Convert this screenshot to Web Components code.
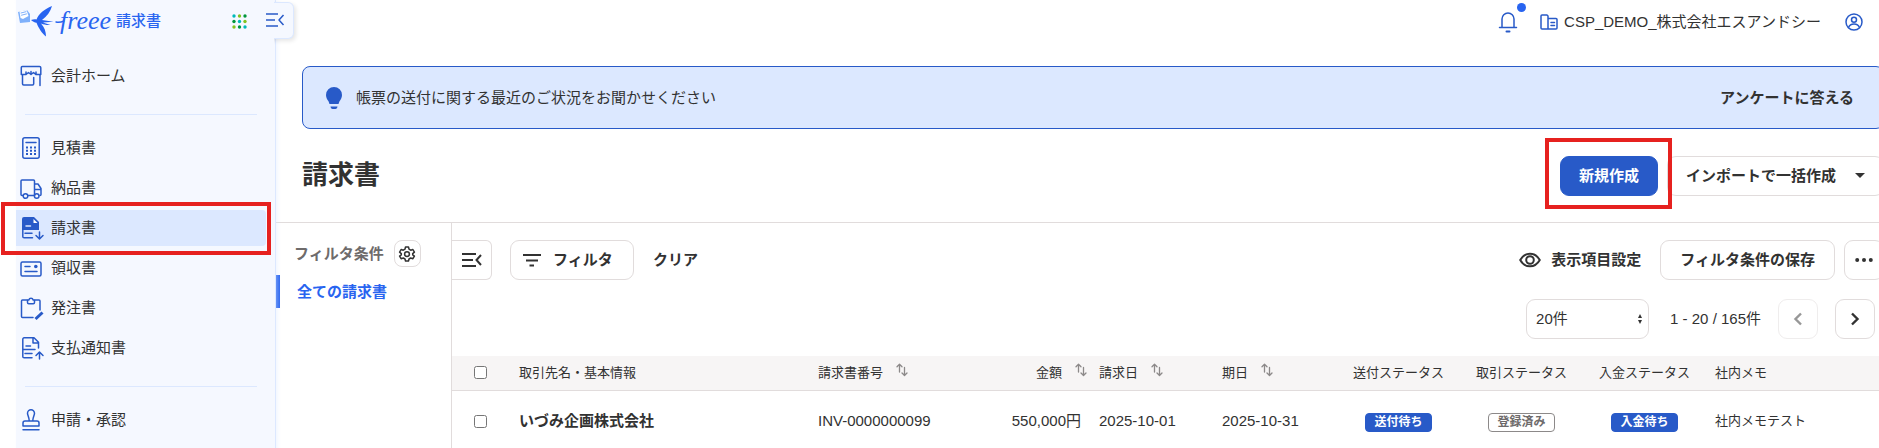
<!DOCTYPE html>
<html lang="ja">
<head>
<meta charset="utf-8">
<title>freee 請求書</title>
<style>
    :root {
        --primary: #285ac8;
        --link: #2864f0;
        --text: #323232;
        --muted: #6e6b6b;
        --line: #e1dcdc;
        --side-bg: #f5f8ff;
        --pale: #dce8ff;
        --mark: #e6211f;
    }

    body {
        margin: 0;
        background: #fff;
        color: var(--text);
        font: 15px/20px "Liberation Sans", "Noto Sans CJK JP", sans-serif;
        overflow: hidden;
    }
</style>
</head>
<body>
<invoice-app></invoice-app>

<script>
const base = `
    * { box-sizing: border-box; }
    button, select, input { font: inherit; color: inherit; margin: 0; }
    button { cursor: pointer; }
    a { color: inherit; text-decoration: none; }
`

function define(name, css, html) {
	const template = document.createElement('template')
	template.innerHTML = `<style>${base}${css}</style>${html}`

	customElements.define(name, class extends HTMLElement {
		constructor() {
			super()
			this.attachShadow({ mode: 'open' }).appendChild(template.content.cloneNode(true))
		}
	})
}

// icons: [viewBox, markup], stroked with the current colour
const icons = {
	shop: ['0 0 22 22', '<path d="M3 1.500h16.500a1.300 1.300 0 0 1 1.300 1.300V9.500H15.800L13.500 7.500 11 9.500 8.500 7.500 6 9.500H1.300V2.800A1.300 1.300 0 0 1 3 1.500zM6 9V7M11 9V6.500M16 9V7M2.500 9.500V18.800a1.200 1.200 0 0 0 1.200 1.200H12.500a1.200 1.200 0 0 0 1.200-1.200V12.500M20 9.500V20.500"/>'],
	calc: ['0 0 22 22', '<rect x="2.800" y=".8" width="16.400" height="20.400" rx="2"/><path d="M6 5.500h10"/><g fill="currentColor" stroke="none"><path d="M6 9.500h2v2H6zM10 9.500h2v2h-2zM14 9.500h2v2h-2zM6 12.800h2v2H6zM10 12.800h2v2h-2zM14 12.800h2v2h-2zM6 16.100h2v2H6zM10 16.100h2v2h-2zM14 16.100h2v2h-2z"/></g>'],
	truck: ['0 0 22 22', '<path d="M3 18.500H2a1 1 0 0 1-1-1V4a1 1 0 0 1 1-1h11.500a1 1 0 0 1 1 1v14.500H8M14.500 7H18l3 4.500v6a1 1 0 0 1-1 1M14.500 12.500H21"/><circle cx="5.500" cy="19" r="2.300"/><circle cx="16.700" cy="19" r="2.300"/>'],
	invoice: ['0 0 22 22', '<path fill="currentColor" stroke="none" d="M4 0h10l5 5v8H2V2a2 2 0 0 1 2-2z"/><path fill="#fff" stroke="none" d="M13.500 2v4h4z"/><path stroke="#dce8ff" d="M6 9h4.500"/><path d="M2.800 12v7.500a1.300 1.300 0 0 0 1.300 1.300H12.500M5 16.300h7M19.500 15v6.500M16 18.500l3.500 3.500 3.500-3.500"/>'],
	receipt: ['0 0 22 22', '<rect x="1" y="5" width="20" height="14" rx="1.500"/><path d="M5 9.500h5M5 14.500h12"/><circle cx="15.800" cy="9.500" r="1.800" fill="currentColor" stroke="none"/>'],
	order: ['0 0 22 22', '<path d="M7 3H2.500a1 1 0 0 0-1 1v15.500a1 1 0 0 0 1 1H13M15 3h4a1 1 0 0 1 1 1v9"/><path d="M7.500 3h1.300a2.300 2.300 0 0 1 4.400 0H14.500v2.500a1.200 1.200 0 0 1-1.200 1.200H8.700a1.200 1.200 0 0 1-1.200-1.200z"/><path stroke-width="3" stroke-linecap="butt" d="M15.500 22l7-6.500"/>'],
	notice: ['0 0 22 22', '<path d="M14 .8H4.100A1.300 1.300 0 0 0 2.800 2.100V19.500a1.300 1.300 0 0 0 1.300 1.300H12M14 .8l4.500 4.500V11M13 1.500v4.500h5M6 9h4.500M3 12.500h12M5 16.500h7M19.500 22v-6.500M16 18.500l3.500-3.500 3.500 3.500"/>'],
	stamp: ['0 0 22 22', '<path d="M9.200 11.500C9.200 8.500 7.500 6 7.500 4.200a3.500 3.500 0 0 1 7 0C14.500 6 12.800 8.500 12.800 11.500M3 17v-3a2 2 0 0 1 2-2h12a2 2 0 0 1 2 2v3zM3 20.800h16"/>'],
	collapse: ['0 0 20 16', '<path stroke-linecap="butt" d="M1 2h12M1 8h9M1 14h12M18.500 3l-4.500 5 4.500 5"/>'],
	fold: ['0 0 20 16', '<path stroke-width="2" stroke-linecap="butt" stroke-linejoin="miter" d="M0 2h14M0 8h11M0 14h14M19 3l-4.500 5 4.500 5"/>'],
	bell: ['0 0 20 22', '<path d="M1.500 16.500h17M4 16.500V8a6 6 0 0 1 12 0v8.500"/><path stroke-width="2" d="M8.500 20.500h3"/>'],
	building: ['0 0 18 16', '<path d="M8 15H2a1 1 0 0 1-1-1V2a1 1 0 0 1 1-1h5l1 1zM8 4.500h8a1 1 0 0 1 1 1V14a1 1 0 0 1-1 1H8zM11 8.500h3.500M11 11.500h3.500"/>'],
	user: ['0 0 18 18', '<circle cx="9" cy="9" r="8"/><circle cx="9" cy="6.800" r="2.500"/><path d="M3.500 14.500c1-2.500 3-3.500 5.500-3.500s4.500 1 5.500 3.500"/>'],
	bulb: ['0 0 16 22', '<path fill="currentColor" stroke="none" d="M8 0a8 8 0 0 1 8 8c0 2.700-1.200 4.500-2.500 6.200L12.500 17h-9l-1-2.800C1.200 12.500 0 10.700 0 8a8 8 0 0 1 8-8zM4.500 19.500h7a2.500 2.500 0 0 1-2 2.500h-3a2.500 2.500 0 0 1-2-2.500z"/>'],
	gear: ['0 0 16 16', '<path d="M6.500 1h3l.5 2.200 1.700 1 2.200-.7 1.500 2.600L13.700 7.600v1.200l1.700 1.300-1.500 2.600-2.200-.7-1.700 1L9.500 15h-3L6 13l-1.700-1-2.200.7L.6 10.100l1.700-1.300V7.600L.6 6.100l1.500-2.600 2.200.7L6 3.200z"/><circle cx="8" cy="8.100" r="2.400"/>'],
	filter: ['0 0 18 14', '<path stroke-width="2" stroke-linecap="butt" d="M0 2h18M3 7.500h12M6.500 12.500h4.500"/>'],
	eye: ['0 0 22 16', '<path stroke-width="2" d="M1.200 8C3.500 4 7 1.700 11 1.700S18.500 4 20.800 8C18.500 12 15 14.300 11 14.300S3.500 12 1.200 8z"/><circle stroke-width="2" cx="11" cy="8" r="3.800"/>'],
	dots: ['0 0 18 4', '<g fill="currentColor" stroke="none"><circle cx="2.200" cy="2" r="2"/><circle cx="9" cy="2" r="2"/><circle cx="15.800" cy="2" r="2"/></g>'],
	prev: ['0 0 10 14', '<path stroke-width="2.400" stroke-linecap="butt" stroke-linejoin="miter" d="M8 1.500L2.500 7 8 12.500"/>'],
	next: ['0 0 10 14', '<path stroke-width="2.400" stroke-linecap="butt" stroke-linejoin="miter" d="M2 1.500L7.500 7 2 12.500"/>'],
	caret: ['0 0 10 5', '<path fill="currentColor" stroke="none" d="M0 0h10L5 5z"/>'],
	updown: ['0 0 6 10', '<path fill="currentColor" stroke="none" d="M1 4l2-4 2 4zM1 6l2 4 2-4z"/>'],
	sort: ['0 0 12 14', '<path stroke-width="1.300" d="M3.500 9V1.500M1 3.800l2.500-2.500L6 3.800M8.500 4.500V12M6 10l2.500 2.500L11 10"/>'],
	apps: ['0 0 15 15', '<g stroke="none"><g fill="#00b9b9"><circle cx="2" cy="2" r="1.700"/><circle cx="7.500" cy="7.500" r="1.700"/><circle cx="13" cy="13" r="1.700"/></g><g fill="#82c31e"><circle cx="7.500" cy="2" r="1.700"/><circle cx="13" cy="7.500" r="1.700"/><circle cx="2" cy="13" r="1.700"/></g><g fill="#00963c"><circle cx="13" cy="2" r="1.700"/><circle cx="2" cy="7.500" r="1.700"/><circle cx="7.500" cy="13" r="1.700"/></g></g>'],
	// swallow carrying a letter
	swallow: ['0 0 42 32', '<g stroke="none"><path fill="#7eb0fb" d="M0 7l9-2 3 4v8L2 18z"/><path fill="#fff" d="M1.500 6.500l7-1.500 2 6-5.500 3-2.500-1z"/><path stroke="#7eb0fb" stroke-width="1" d="M3 8l5-1.300M3.500 10.200l5-1.300"/><path fill="currentColor" d="M13 15c2-.8 4-.9 5.500-.6C21 8.500 26 4.500 34 1c-1.500 5.500-5 10.500-10 14l11.500 1.800-10.500.8 7.500 2.300c-3.500.3-6.500-.2-9.500-1.400 3.500 3.800 5 8 5 13C24 28.500 20.500 23 18.500 17.800c-2-.3-4-1.300-5.500-2.800z"/></g><path stroke-width="1.400" d="M38 17c2 .5 5 .3 8-1"/>'],
}

customElements.define('app-icon', class extends HTMLElement {
	constructor() {
		super()
		this.attachShadow({ mode: 'open' })
	}

	connectedCallback() {
		const [box, body] = icons[this.getAttribute('name')]
		const [, , w, h] = box.split(' ')
		this.shadowRoot.innerHTML = `
            <style>
                :host { display: inline-flex; flex: none; }
                svg { display: block; overflow: visible; }
            </style>
            <svg width="${w}" height="${h}" viewBox="${box}" fill="none" stroke="currentColor"
                stroke-width="1.5" stroke-linecap="round" stroke-linejoin="round" aria-hidden="true">${body}</svg>
        `
	}
})

// red frame drawn over whatever it wraps
define('mark-frame', `
    :host { display: block; position: relative; }
    i {
        position: absolute;
        inset: var(--frame-inset, 0);
        z-index: 3;
        border: 4px solid var(--mark);
        pointer-events: none;
    }
`, `<slot></slot><i></i>`)

define('nav-item', `
    :host { display: block; }
    a {
        display: flex;
        align-items: center;
        gap: 9px;
        height: 36px;
        margin-right: 9px;
        padding-left: 4px;
        border-radius: 0 4px 4px 0;
    }
    :host([current]) a { background: var(--pale); }
    ::slotted(app-icon) { color: var(--primary); }
`, `<a href="#"><slot name="icon"></slot><slot></slot></a>`)

define('side-bar', `
    :host {
        display: block;
        position: relative;
        background: var(--side-bg);
        border-right: 1px solid var(--pale);
        box-shadow: 2px 0 4px #dce8ff66;
    }
    .brand {
        display: flex;
        align-items: center;
        height: 42px;
        margin-bottom: 16px;
        padding: 0 28px 0 2px;
        color: var(--link);
    }
    .logo { display: flex; align-items: center; flex: 1; }
    .word {
        font: italic 26px/30px "Liberation Serif", serif;
        margin-right: 5px;
    }
    .product { font-weight: 500; }
    .apps { border: 0; padding: 0; background: none; display: flex; }
    .toggle {
        position: absolute;
        top: 2px;
        right: -19px;
        z-index: 2;
        display: flex;
        align-items: center;
        height: 37px;
        width: 34px;
        border: 1px solid var(--pale);
        border-left: 0;
        border-radius: 0 6px 6px 0;
        background: var(--side-bg);
        color: var(--primary);
        box-shadow: 2px 2px 4px #0000001a;
        clip-path: inset(-6px -8px -8px 14px);
    }
    .toggle-icon {
        position: absolute;
        top: 12px;
        right: -10px;
        z-index: 2;
        color: var(--primary);
        pointer-events: none;
    }
    nav { display: grid; gap: 4px; }
    hr {
        width: 232px;
        height: 1px;
        margin: 16px 0 11px 9px;
        border: 0;
        background: var(--pale);
    }
    mark-frame { --frame-inset: -8px 4px -9px -15px; }
`, `
    <div class="brand">
        <a class="logo" href="#"><app-icon name="swallow"></app-icon><span class="word">freee</span><span class="product">請求書</span></a>
        <button class="apps" aria-label="アプリ一覧"><app-icon name="apps"></app-icon></button>
    </div>
    <button class="toggle" aria-label="メニューを閉じる"></button>
    <app-icon class="toggle-icon" name="collapse"></app-icon>
    <nav>
        <nav-item><app-icon slot="icon" name="shop"></app-icon>会計ホーム</nav-item>
        <hr>
        <nav-item><app-icon slot="icon" name="calc"></app-icon>見積書</nav-item>
        <nav-item><app-icon slot="icon" name="truck"></app-icon>納品書</nav-item>
        <mark-frame><nav-item current><app-icon slot="icon" name="invoice"></app-icon>請求書</nav-item></mark-frame>
        <nav-item><app-icon slot="icon" name="receipt"></app-icon>領収書</nav-item>
        <nav-item><app-icon slot="icon" name="order"></app-icon>発注書</nav-item>
        <nav-item><app-icon slot="icon" name="notice"></app-icon>支払通知書</nav-item>
        <hr>
        <nav-item><app-icon slot="icon" name="stamp"></app-icon>申請・承認</nav-item>
    </nav>
`)

define('top-bar', `
    :host {
        display: flex;
        align-items: center;
        justify-content: flex-end;
        height: 44px;
        padding-right: 16px;
    }
    app-icon { color: var(--primary); }
    button { position: relative; display: flex; border: 0; padding: 0; background: none; }
    .bell { margin-right: 22px; }
    .bell i {
        position: absolute;
        top: -8px;
        right: -8px;
        width: 9px;
        height: 9px;
        border-radius: 50%;
        background: var(--link);
    }
    .company { display: flex; align-items: center; gap: 6px; margin-right: 24px; }
`, `
    <button class="bell" aria-label="お知らせ"><app-icon name="bell"></app-icon><i></i></button>
    <a class="company" href="#"><app-icon name="building"></app-icon><slot></slot></a>
    <button aria-label="アカウント"><app-icon name="user"></app-icon></button>
`)

define('info-banner', `
    :host {
        display: flex;
        align-items: center;
        gap: 14px;
        height: 63px;
        margin: 22px 0 0 26px;
        padding: 0 29px 0 23px;
        border: 1px solid var(--primary);
        border-radius: 8px;
        background: var(--pale);
    }
    app-icon { color: var(--primary); }
    p { flex: 1; margin: 0; }
    ::slotted(a) { color: inherit; font-weight: bold; text-decoration: none; }
`, `<app-icon name="bulb"></app-icon><p><slot></slot></p><slot name="action"></slot>`)

define('ui-button', `
    :host { display: block; }
    button {
        display: flex;
        align-items: center;
        justify-content: center;
        gap: var(--gap, 12px);
        width: 100%;
        height: 40px;
        padding: 0 var(--pad, 18px);
        border: 1px solid var(--line);
        border-radius: 9px;
        background: #fff;
        font-weight: bold;
        white-space: nowrap;
    }
    :host([primary]) button {
        border-color: var(--primary);
        background: var(--primary);
        color: #fff;
    }
    :host([plain]) button { border-color: transparent; background: none; }
    :host([square]) { width: 40px; }
    :host([square]) button { padding: 0; }
    :host([dim]) { opacity: .5; }
    :host([tab]) button { border-left: 0; border-radius: 0 6px 6px 0; }
`, `<button><slot></slot></button>`)

define('page-head', `
    :host {
        display: flex;
        align-items: center;
        gap: 9px;
        height: 94px;
        padding-left: 26px;
        border-bottom: 1px solid var(--line);
    }
    h1 { flex: 1; margin: 0 0 2px; font-size: 26px; line-height: 40px; }
    .actions { display: flex; gap: 9px; }
    mark-frame { --frame-inset: -18px -14px -13px -15px; }
    .import { --gap: 19px; }
`, `
    <h1>請求書</h1>
    <div class="actions">
        <mark-frame><ui-button primary>新規作成</ui-button></mark-frame>
        <ui-button class="import">インポートで一括作成<app-icon name="caret"></app-icon></ui-button>
    </div>
`)

define('filter-panel', `
    :host {
        display: block;
        padding-top: 17px;
        border-right: 1px solid var(--line);
        font-weight: bold;
    }
    .title { display: flex; align-items: center; gap: 10px; padding-left: 18px; color: var(--muted); }
    button {
        display: flex;
        align-items: center;
        justify-content: center;
        width: 27px;
        height: 27px;
        padding: 0;
        border: 1px solid var(--line);
        border-radius: 8px;
        background: #fff;
        color: var(--text);
    }
    a {
        display: block;
        margin-top: 8px;
        padding: 7px 0 6px 17px;
        border-left: 4px solid var(--link);
        color: var(--link);
    }
`, `
    <div class="title">フィルタ条件<button aria-label="フィルタ条件の設定"><app-icon name="gear"></app-icon></button></div>
    <a href="#">全ての請求書</a>
`)

define('list-tools', `
    :host { display: grid; gap: 19px; padding: 17px 0; }
    div { display: flex; align-items: center; }
    .filter { margin-left: 18px; --pad: 12px; }
    .view { margin-left: auto; --gap: 10px; }
    .save { margin-right: 9px; --pad: 19px; }
    .pages { justify-content: flex-end; gap: 17px; padding-right: 9px; }
    label { position: relative; color: var(--text); }
    label app-icon { position: absolute; right: 6px; top: 15px; }
    select {
        appearance: none;
        display: block;
        width: 123px;
        height: 40px;
        padding: 0 9px;
        border: 1px solid var(--line);
        border-radius: 9px;
        background: #fff;
    }
    .count { margin-left: 4px; }
`, `
    <div>
        <ui-button square tab><app-icon name="fold"></app-icon></ui-button>
        <ui-button class="filter"><app-icon name="filter"></app-icon>フィルタ&nbsp;&nbsp;</ui-button>
        <ui-button plain>クリア</ui-button>
        <ui-button class="view" plain><app-icon name="eye"></app-icon>表示項目設定</ui-button>
        <ui-button class="save">フィルタ条件の保存</ui-button>
        <ui-button square><app-icon name="dots"></app-icon></ui-button>
    </div>
    <div class="pages">
        <label><select aria-label="表示件数"><option>20件</option><option>50件</option><option>100件</option></select><app-icon name="updown"></app-icon></label>
        <span class="count">1 - 20 / 165件</span>
        <ui-button square dim><app-icon name="prev"></app-icon></ui-button>
        <ui-button square><app-icon name="next"></app-icon></ui-button>
    </div>
`)

define('status-badge', `
    :host {
        display: inline-block;
        padding: 0 8px;
        border: 1px solid var(--primary);
        border-radius: 4px;
        background: var(--primary);
        color: #fff;
        font-size: 12px;
        line-height: 17px;
        font-weight: bold;
    }
    :host([outline]) { border-color: #8c8989; background: #fff; color: var(--muted); }
`, `<slot></slot>`)

define('invoice-table', `
    :host { display: block; }
    table { width: 100%; table-layout: fixed; border-collapse: collapse; }
    th, td { padding: 0 9px; text-align: left; white-space: nowrap; }
    th {
        height: 34px;
        border-bottom: 1px solid var(--line);
        background: #f7f5f5;
        font-size: 13px;
        font-weight: normal;
    }
    td { height: 62px; }
    .check { width: 58px; padding-left: 22px; }
    .name { width: 299px; }
    .number { width: 158px; }
    .col { width: 123px; }
    .center { text-align: center; padding: 0 0 0 2px; }
    .money { text-align: right; }
    th.money { padding-right: 3px; }
    th app-icon { margin-left: 13px; color: #8c8989; }
    td.name { font-weight: bold; }
    .memo { font-size: 13px; padding-left: 10px; }
    input { display: block; width: 13px; height: 13px; }
`, `
    <table>
        <thead>
            <tr>
                <th class="check"><input type="checkbox" aria-label="全て選択"></th>
                <th class="name">取引先名・基本情報</th>
                <th class="number">請求書番号<app-icon name="sort"></app-icon></th>
                <th class="col money">金額<app-icon name="sort"></app-icon></th>
                <th class="col">請求日<app-icon name="sort"></app-icon></th>
                <th class="col">期日<app-icon name="sort"></app-icon></th>
                <th class="col center">送付ステータス</th>
                <th class="col center">取引ステータス</th>
                <th class="col center">入金ステータス</th>
                <th class="memo">社内メモ</th>
            </tr>
        </thead>
        <tbody>
            <tr>
                <td class="check"><input type="checkbox" aria-label="いづみ企画株式会社を選択"></td>
                <td class="name">いづみ企画株式会社</td>
                <td>INV-0000000099</td>
                <td class="money">550,000円</td>
                <td>2025-10-01</td>
                <td>2025-10-31</td>
                <td class="center"><status-badge>送付待ち</status-badge></td>
                <td class="center"><status-badge outline>登録済み</status-badge></td>
                <td class="center"><status-badge>入金待ち</status-badge></td>
                <td class="memo">社内メモテスト</td>
            </tr>
        </tbody>
    </table>
`)

define('invoice-app', `
    :host {
        display: grid;
        grid-template-columns: 260px minmax(0, 1fr);
        min-height: 100vh;
        padding-left: 16px;
    }
    /* the page body runs a little past the right edge of the window */
    .wide { margin-right: -5px; }
    .body { display: grid; grid-template-columns: 176px minmax(0, 1fr); flex: 1; }
    main { display: flex; flex-direction: column; min-width: 0; }
`, `
    <side-bar></side-bar>
    <main>
        <top-bar>CSP_DEMO_株式会社エスアンドシー</top-bar>
        <info-banner class="wide">帳票の送付に関する最近のご状況をお聞かせください<a slot="action" href="#">アンケートに答える</a></info-banner>
        <page-head class="wide"></page-head>
        <div class="body wide">
            <filter-panel></filter-panel>
            <section>
                <list-tools></list-tools>
                <invoice-table></invoice-table>
            </section>
        </div>
    </main>
`)
</script>
</body>
</html>
